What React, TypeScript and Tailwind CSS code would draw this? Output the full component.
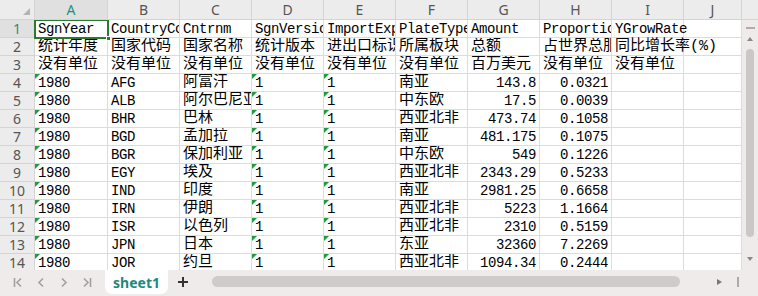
import React from "react";

const cols = ["A", "B", "C", "D", "E", "F", "G", "H", "I", "J"];
const widths = ["w-[73px]", "w-[72px]", "w-[72px]", "w-[72px]", "w-[72px]", "w-[72px]", "w-[72px]", "w-[72px]", "w-[72px]", "w-[58px]"];

const head = ["SgnYear", "CountryCode", "Cntrnm", "SgnVersion", "ImportExport", "PlateType", "Amount", "Proportion", "YGrowRate"];
const label = ["统计年度", "国家代码", "国家名称", "统计版本", "进出口标识", "所属板块", "总额", "占世界总服务", "同比增长率(%)"];
const unit = ["没有单位", "没有单位", "没有单位", "没有单位", "没有单位", "没有单位", "百万美元", "没有单位", "没有单位"];

const data: [string, string, string, string, string][] = [
  ["AFG", "阿富汗", "南亚", "143.8", "0.0321"],
  ["ALB", "阿尔巴尼亚", "中东欧", "17.5", "0.0039"],
  ["BHR", "巴林", "西亚北非", "473.74", "0.1058"],
  ["BGD", "孟加拉", "南亚", "481.175", "0.1075"],
  ["BGR", "保加利亚", "中东欧", "549", "0.1226"],
  ["EGY", "埃及", "西亚北非", "2343.29", "0.5233"],
  ["IND", "印度", "南亚", "2981.25", "0.6658"],
  ["IRN", "伊朗", "西亚北非", "5223", "1.1664"],
  ["ISR", "以色列", "西亚北非", "2310", "0.5159"],
  ["JPN", "日本", "东亚", "32360", "7.2269"],
  ["JOR", "约旦", "西亚北非", "1094.34", "0.2444"],
];

type CellProps = {
  w: string;
  text?: string;
  right?: boolean;
  flag?: boolean;
  spill?: boolean;
};

const Cell = ({ w, text = "", right, flag, spill }: CellProps) => {
  const cjk = /[\u4e00-\u9fff]/.test(text);
  return (
    <div
      className={`relative ${w} h-[18px] shrink-0 border-r border-b border-[#dcdcdc] bg-white ${
        spill ? "overflow-visible z-10" : "overflow-hidden"
      }`}
    >
      {flag && (
        <div className="absolute top-0 left-0 w-0 h-0 border-t-[5px] border-r-[5px] border-t-[#1f9a3c] border-r-transparent" />
      )}
      <div
        className={`h-full flex items-end whitespace-nowrap px-[3px] text-black ${
          right ? "justify-end" : "justify-start"
        } ${cjk ? "text-[15px] leading-[17px]" : "text-[14px] leading-[16px] tracking-[-0.4px]"}`}
      >
        {text}
      </div>
    </div>
  );
};

const RowHead = ({ n, active }: { n: number; active?: boolean }) => (
  <div
    className={`w-[35px] h-[18px] shrink-0 border-r border-b border-[#d4d4d4] flex items-center justify-center text-[14px] font-['Noto_Sans',sans-serif] ${
      active ? "bg-[#e0e0e0] text-[#1c9283]" : "bg-[#ececec] text-[#555]"
    }`}
  >
    {n}
  </div>
);

export default function App() {
  const rows: CellProps[][] = [];
  rows.push(head.map((t, i) => ({ w: widths[i], text: t, spill: i === 8 })));
  rows.push(label.map((t, i) => ({ w: widths[i], text: t, spill: i === 8 })));
  rows.push(unit.map((t, i) => ({ w: widths[i], text: t })));
  data.forEach((d) => {
    rows.push([
      { w: widths[0], text: "1980", flag: true },
      { w: widths[1], text: d[0] },
      { w: widths[2], text: d[1] },
      { w: widths[3], text: "1", flag: true },
      { w: widths[4], text: "1", flag: true },
      { w: widths[5], text: d[2] },
      { w: widths[6], text: d[3], right: true },
      { w: widths[7], text: d[4], right: true },
      { w: widths[8], text: "" },
    ]);
  });

  return (
    <div className="w-[758px] h-[296px] overflow-hidden bg-white flex flex-col font-['Liberation_Mono','Noto_Sans_CJK_SC',monospace]">
      {/* column header */}
      <div className="flex h-[20px] shrink-0 bg-[#ececec] border-b border-[#d4d4d4]">
        <div className="relative w-[35px] shrink-0 border-r border-[#d4d4d4]">
          <div className="absolute right-[4px] bottom-[4px] w-0 h-0 border-b-[7px] border-l-[7px] border-b-[#b4b4b4] border-l-transparent" />
        </div>
        {cols.map((c, i) => (
          <div
            key={c}
            className={`${widths[i]} shrink-0 border-r border-[#d4d4d4] flex items-center justify-center text-[14px] font-['Noto_Sans',sans-serif] ${
              i === 0 ? "bg-[#e0e0e0] text-[#1c9283]" : "text-[#555]"
            }`}
          >
            {c}
          </div>
        ))}
        <div className="flex-1" />
      </div>

      {/* grid + vertical scrollbar */}
      <div className="flex flex-1 min-h-0">
        <div className="relative flex-1 overflow-hidden">
          {rows.map((r, ri) => (
            <div key={ri} className="flex">
              <RowHead n={ri + 1} active={ri === 0} />
              {r.map((c, ci) => (
                <Cell key={ci} {...c} />
              ))}
              <Cell w={widths[9]} />
            </div>
          ))}
          {/* selected cell */}
          <div className="absolute left-[34px] top-[-1px] w-[75px] h-[20px] border-2 border-[#2c7a2f] z-20">
            <div className="absolute right-[-4px] bottom-[-4px] w-[5px] h-[5px] bg-[#2c7a2f] border border-white" />
          </div>
        </div>
        <div className="w-[16px] shrink-0 bg-[#efebeb] flex flex-col items-center pt-[7px]">
          <div className="w-[9px] h-[2px] bg-[#b0acac]" />
          <div className="mt-[8px] w-0 h-0 border-l-[3px] border-r-[3px] border-b-[4px] border-l-transparent border-r-transparent border-b-[#888]" />
          <div className="mt-[8px] w-[8px] flex-1 rounded-full bg-[#cbc7c7] mb-[20px]" />
          <div className="mb-[9px] w-0 h-0 border-l-[3px] border-r-[3px] border-t-[4px] border-l-transparent border-r-transparent border-t-[#888]" />
        </div>
      </div>

      {/* sheet tabs */}
      <div className="h-[26px] shrink-0 bg-[#efebeb] flex items-start font-['Noto_Sans',sans-serif]">
        <div className="flex items-center h-[24px] pl-[13px] gap-[13px] text-[#a0a0a0]">
          <svg width="10" height="11" viewBox="0 0 10 11" fill="none" stroke="currentColor" strokeWidth="1.6">
            <path d="M1.5 1v9M8 1.5l-4 4 4 4" />
          </svg>
          <svg width="10" height="11" viewBox="0 0 10 11" fill="none" stroke="currentColor" strokeWidth="1.6">
            <path d="M7 1.5l-4 4 4 4" />
          </svg>
          <svg width="10" height="11" viewBox="0 0 10 11" fill="none" stroke="currentColor" strokeWidth="1.6">
            <path d="M3 1.5l4 4-4 4" />
          </svg>
          <svg width="10" height="11" viewBox="0 0 10 11" fill="none" stroke="currentColor" strokeWidth="1.6">
            <path d="M2 1.5l4 4-4 4M8.5 1v9" />
          </svg>
        </div>
        <div className="ml-[13px] w-[63px] h-[24px] bg-white rounded-b-[7px] flex items-center justify-center text-[14px] font-bold text-[#1b8a7e]">
          sheet1
        </div>
        <div className="ml-[9px] h-[24px] flex items-center">
          <svg width="12" height="12" viewBox="0 0 12 12" stroke="#333" strokeWidth="2">
            <path d="M6 1v10M1 6h10" />
          </svg>
        </div>
        <div className="ml-[23px] mt-[6px] w-[468px] h-[11px] rounded-full bg-[#cfcbcb]" />
        <div className="ml-[37px] h-[24px] flex items-center gap-[15px]">
          <div className="w-0 h-0 border-t-[3px] border-b-[3px] border-l-[5px] border-t-transparent border-b-transparent border-l-[#777]" />
          <div className="w-[2px] h-[10px] bg-[#aaa]" />
        </div>
      </div>
    </div>
  );
}
